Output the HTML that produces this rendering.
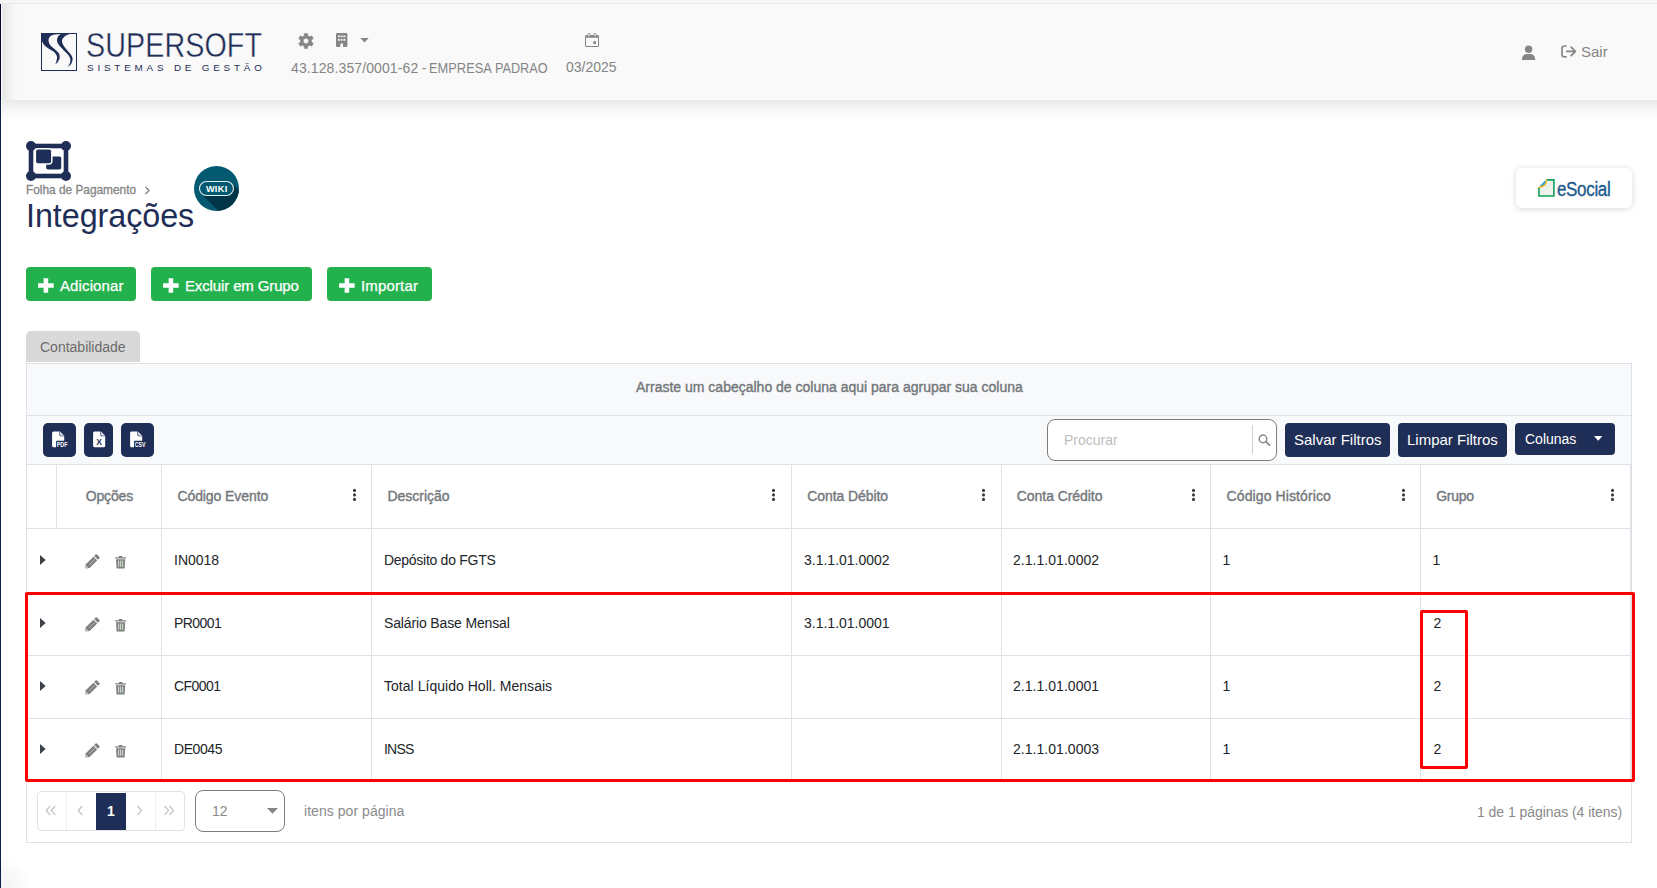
<!DOCTYPE html>
<html lang="pt-br">
<head>
<meta charset="utf-8">
<title>Integrações</title>
<style>
*{box-sizing:border-box;margin:0;padding:0}
html,body{width:1657px;height:888px;overflow:hidden;background:#fff}
body{font-family:"Liberation Sans",sans-serif;position:relative;color:#212529}
.abs{position:absolute}
.t{position:absolute;white-space:nowrap;line-height:1}
#strip{left:0;top:0;width:1657px;height:4px;background:#f5f5f5;border-bottom:1px solid #e9e9e9}
#hdr{left:2px;top:4px;width:1655px;height:96px;background:#f9f9f9}
#hdrsb{left:2px;top:100px;width:1655px;height:24px;background:linear-gradient(180deg,rgba(0,0,0,.085) 0,rgba(0,0,0,.05) 25%,rgba(0,0,0,.022) 55%,rgba(0,0,0,.006) 80%,rgba(0,0,0,0) 100%)}
#hdrsh{left:2px;top:4px;width:16px;height:96px;background:linear-gradient(90deg,rgba(0,0,0,.075),rgba(0,0,0,.03) 45%,rgba(0,0,0,0))}
#side1{left:0;top:4px;width:1px;height:96px;background:#02062b}
#side2{left:0;top:100px;width:1px;height:788px;background:#0d1f4a}
.gray{color:#858585}
.navy{color:#1f2e56}
.gbtn{position:absolute;top:267px;height:34px;background:#23b14d;border-radius:4px}
.nbtn{position:absolute;background:#1f2e56;border-radius:4px}
#grid{left:26px;top:363px;width:1606px;height:480px;border:1px solid #dee2e6;background:#fff}
.hl{position:absolute;height:1px;background:#dee2e6}
.vl{position:absolute;width:1px;background:#dee2e6}
.th{color:#73777b;font-size:14px;-webkit-text-stroke:0.38px #73777b}
.td{color:#212529;font-size:14px}
.bw{color:#fff;font-size:15px;-webkit-text-stroke:0.25px #fff}
.pg{color:#8a8a8a;font-size:14px}
</style>
</head>
<body>
<div class="abs" id="strip"></div>
<div class="abs" id="hdr"></div>
<div class="abs" id="hdrsh"></div>
<div class="abs" id="hdrsb"></div>
<div class="abs" id="side1"></div>
<div class="abs" id="side2"></div>
<div class="abs" style="left:1px;top:858px;width:30px;height:30px;background:radial-gradient(circle at 0 100%,rgba(0,0,0,.05),rgba(0,0,0,.02) 50%,rgba(0,0,0,0) 72%)"></div>

<!-- LOGO -->
<svg class="abs" id="i_logo" style="left:41px;top:33px" width="36" height="38" viewBox="0 0 36 38">
<rect x="0.5" y="0.5" width="35" height="37" fill="none" stroke="#1f2e56" stroke-width="1"/>
<path fill="#1f2e56" d="M0.90,8.30 C1.32,8.97 2.25,11.06 3.40,12.30 C4.55,13.54 6.15,14.60 7.80,15.75 C9.45,16.90 11.93,17.88 13.30,19.20 C14.67,20.52 15.67,22.13 16.00,23.70 C16.33,25.27 15.58,27.32 15.30,28.60 C15.02,29.88 14.47,30.93 14.30,31.40 C14.70,31.02 15.97,30.22 16.70,29.10 C17.43,27.98 18.53,26.18 18.70,24.70 C18.87,23.22 18.52,21.62 17.70,20.20 C16.88,18.78 15.20,17.52 13.80,16.20 C12.40,14.88 10.33,13.62 9.30,12.30 C8.27,10.98 7.77,9.62 7.60,8.30 C7.43,6.98 7.60,5.47 8.30,4.40 C9.00,3.33 9.90,2.48 11.80,1.90 C13.70,1.32 18.38,1.07 19.70,0.90 L0.9,0.9 Z"/>
<path fill="#1f2e56" d="M19.70,0.90 C19.20,1.40 17.32,2.75 16.70,3.90 C16.08,5.05 15.83,6.48 16.00,7.80 C16.17,9.12 16.75,10.40 17.70,11.80 C18.65,13.20 20.22,14.63 21.70,16.20 C23.18,17.77 25.37,19.70 26.60,21.20 C27.83,22.70 28.68,23.80 29.10,25.20 C29.52,26.60 29.47,28.12 29.10,29.60 C28.73,31.08 27.27,33.35 26.90,34.10 C27.43,33.60 29.32,32.35 30.10,31.10 C30.88,29.85 31.52,28.00 31.60,26.60 C31.68,25.20 31.43,24.18 30.60,22.70 C29.77,21.22 27.92,19.35 26.60,17.70 C25.28,16.05 23.63,14.37 22.70,12.80 C21.77,11.23 21.08,9.62 21.00,8.30 C20.92,6.98 21.33,5.97 22.20,4.90 C23.07,3.83 24.47,2.62 26.20,1.90 C27.93,1.18 31.53,0.82 32.60,0.60 Z"/>
</svg>
<div class="t navy" id="t_super" style="left:85.500px;top:28px;font-size:35.5px;letter-spacing:0.1px;transform-origin:0 0;transform:scaleX(0.808);-webkit-text-stroke:0.4px #f9f9f9">SUPERSOFT</div>
<div class="t navy" id="t_sist" style="left:87px;top:62.500px;font-size:9.9px;letter-spacing:3.8px">SISTEMAS DE GESTÃO</div>

<svg class="abs" id="i_gear" style="left:298px;top:33px" width="16" height="16" viewBox="0 0 16 16"><path fill="#858585" fill-rule="evenodd" stroke="#858585" stroke-width="0.5" stroke-linejoin="round" d="M6.21 2.80L6.36 0.58A7.60 7.60 0 0 1 9.64 0.58L9.79 2.80A5.50 5.50 0 0 1 11.61 3.85L13.60 2.87A7.60 7.60 0 0 1 15.25 5.71L13.40 6.95A5.50 5.50 0 0 1 13.40 9.05L15.25 10.29A7.60 7.60 0 0 1 13.60 13.13L11.61 12.15A5.50 5.50 0 0 1 9.79 13.20L9.64 15.42A7.60 7.60 0 0 1 6.36 15.42L6.21 13.20A5.50 5.50 0 0 1 4.39 12.15L2.40 13.13A7.60 7.60 0 0 1 0.75 10.29L2.60 9.05A5.50 5.50 0 0 1 2.60 6.95L0.75 5.71A7.60 7.60 0 0 1 2.40 2.87L4.39 3.85A5.50 5.50 0 0 1 6.21 2.80ZM5.30 8.00a2.70 2.70 0 1 0 5.40 0a2.70 2.70 0 1 0 -5.40 0z"/></svg>
<svg class="abs" id="i_bld" style="left:336.300px;top:33px" width="11.400" height="14" viewBox="0 0 12 14" preserveAspectRatio="none"><path fill="#858585" fill-rule="evenodd" d="M1.300 0h9.400a1.300 1.300 0 0 1 1.300 1.300v11.400a1.300 1.300 0 0 1 -1.300 1.300h-3.200v-2.300a1.500 1.500 0 0 0 -3 0v2.300h-3.200a1.300 1.300 0 0 1 -1.300 -1.300v-11.400a1.300 1.300 0 0 1 1.300 -1.300zM2.200 2.500v1.700h1.900v-1.700zM5.050 2.500v1.700h1.900v-1.700zM7.900 2.500v1.700h1.900v-1.700zM2.200 6v1.700h1.900v-1.700zM5.050 6v1.700h1.900v-1.700zM7.900 6v1.700h1.900v-1.700z"/></svg>
<svg class="abs" id="i_caret" style="left:360px;top:38px" width="9" height="5" viewBox="0 0 9 5"><path fill="#858585" d="M0.300 0h8.400l-4.200 4.600z"/></svg>
<svg class="abs" id="i_cal" style="left:585px;top:33px" width="14" height="14" viewBox="0 0 14 14"><path fill="#858585" fill-rule="evenodd" d="M1.500 1.900h11a1.500 1.500 0 0 1 1.500 1.500v9.100a1.500 1.500 0 0 1 -1.500 1.500h-11a1.500 1.500 0 0 1 -1.500 -1.500v-9.100a1.500 1.500 0 0 1 1.500 -1.500zM1 4.700v8.300h12v-8.300zM8.300 8.300h2.700v2.700h-2.700z"/><rect x="2.900" y="0.300" width="2.100" height="3.400" rx="1" fill="#dfe6ee" stroke="#858585" stroke-width="0.700"/><rect x="9" y="0.300" width="2.100" height="3.400" rx="1" fill="#dfe6ee" stroke="#858585" stroke-width="0.700"/></svg>
<svg class="abs" id="i_user" style="left:1522px;top:45px" width="14" height="15" viewBox="0 0 14 15"><g fill="#858585"><circle cx="6.600" cy="4.200" r="3.700"/><path d="M0 15v-1.200a4.800 4.800 0 0 1 4.800 -4.800h3.600a4.800 4.800 0 0 1 4.800 4.800v1.200z"/></g></svg>
<svg class="abs" id="i_out" style="left:1561px;top:45px" width="16" height="14" viewBox="0 0 16 14"><g fill="none" stroke="#858585" stroke-width="1.700" stroke-linecap="round" stroke-linejoin="round"><path d="M5 1H3.200A2.200 2.200 0 0 0 1 3.200v6.400A2.200 2.200 0 0 0 3.200 11.800h1.800"/><path d="M5.800 6.400h8.500M10.200 2.200l4.200 4.200l-4.200 4.200"/></g></svg>

<div class="t gray" id="t_cnpj" style="left:291px;top:61px;font-size:14px;letter-spacing:0.11px">43.128.357/0001-62<span style="letter-spacing:-0.5px"> -</span></div>
<div class="t gray" id="t_emp" style="left:429px;top:61px;font-size:14px;transform-origin:0 0;transform:scaleX(0.918)">EMPRESA</div>
<div class="t gray" id="t_pad" style="left:495.200px;top:61px;font-size:14px;transform-origin:0 0;transform:scaleX(0.905)">PADRAO</div>
<div class="t gray" id="t_date" style="left:566px;top:60px;font-size:14px">03/2025</div>
<div class="t gray" id="t_sair" style="left:1581px;top:44px;font-size:15px">Sair</div>

<!-- page icon -->
<svg class="abs" id="i_page" style="left:26px;top:141px" width="45" height="40" viewBox="0 0 45 40"><g fill="#1f2e56"><rect x="5" y="5" width="35" height="30" fill="none" stroke="#1f2e56" stroke-width="4.600"/><circle cx="5" cy="5" r="5"/><circle cx="40" cy="5" r="5"/><circle cx="5" cy="35" r="5"/><circle cx="40" cy="35" r="5"/><rect x="20.200" y="15.500" width="15" height="13" rx="1.800"/><rect x="8.600" y="6.900" width="18" height="16.800" rx="4" fill="#fff"/><rect x="10.100" y="8.400" width="15" height="13.800" rx="1.800"/></g></svg>
<div class="t" id="t_folha" style="left:26px;top:184.800px;font-size:11.9px;color:#868686;letter-spacing:-0.02px;-webkit-text-stroke:0.3px #868686">Folha de Pagamento</div>
<svg class="abs" id="i_gt" style="left:144px;top:186px" width="7" height="9" viewBox="0 0 7 9"><path d="M1.500 1l3.600 3.500l-3.600 3.500" fill="none" stroke="#7a7a7a" stroke-width="1.200"/></svg>
<div class="t navy" id="t_integ" style="left:26px;top:200px;font-size:32.3px;letter-spacing:-0.05px">Integrações</div>

<!-- wiki -->
<svg class="abs" id="i_wiki" style="left:194px;top:166px" width="45" height="45" viewBox="0 0 45 45"><defs><clipPath id="cw"><circle cx="22.500" cy="22.500" r="22.500"/></clipPath></defs><circle cx="22.500" cy="22.500" r="22.500" fill="#03596f"/><g clip-path="url(#cw)"><path fill="#023447" d="M7.200 27.800L37.800 17.200L77.800 57.200L47.200 67.800z"/></g><rect x="5.500" y="15.500" width="34" height="14" rx="7" fill="#03596f" stroke="#e4eef1" stroke-width="1.100"/><text x="22.700" y="25.700" text-anchor="middle" font-family="Liberation Sans, sans-serif" font-weight="bold" font-size="9.200" fill="#fff" letter-spacing="0.300">WIKI</text></svg>

<!-- eSocial -->
<div class="abs" style="left:1516px;top:168px;width:116px;height:40px;background:#fff;border-radius:6px;box-shadow:0 1px 6px rgba(0,0,0,.16)"></div>
<svg class="abs" id="i_esoc" style="left:1538px;top:179px" width="17" height="18" viewBox="0 0 17 18"><path d="M8.300 0.900H15.900V17H0.900V8.300" fill="#edf2ec" stroke="#12a159" stroke-width="1.600" stroke-linejoin="miter"/><path d="M0.100 9.100L9.100 0.100C9.600 5.600 6 9.300 0.100 9.100z" fill="#f9b115"/><path d="M1.600 7.100L7.800 0.900C8 4.300 5.500 7 1.600 7.100z" fill="#2aa9e0"/></svg>
<div class="t" id="t_esoc" style="left:1557px;top:179px;font-size:20px;color:#1d5a8c;letter-spacing:-0.4px;transform-origin:0 0;transform:scaleX(.85);-webkit-text-stroke:0.35px #1d5a8c">eSocial</div>

<!-- green buttons -->
<div class="gbtn" style="left:26px;width:110px"></div>
<div class="gbtn" style="left:151px;width:161px"></div>
<div class="gbtn" style="left:327px;width:105px"></div>
<div class="t bw" id="t_adic" style="left:60px;top:278px;letter-spacing:0.12px">Adicionar</div>
<div class="t bw" id="t_excl" style="left:185px;top:278px;letter-spacing:-0.13px">Excluir em Grupo</div>
<div class="t bw" id="t_impo" style="left:361px;top:278px;letter-spacing:0.15px">Importar</div>
<svg class="abs" style="left:38px;top:278px" width="16" height="15" viewBox="0 0 16 15"><path fill="#fff" d="M5.600 0.200h4.600v5h5.500v4.600h-5.500v5h-4.600v-5h-5.500v-4.600h5.500z"/></svg>
<svg class="abs" style="left:163px;top:278px" width="16" height="15" viewBox="0 0 16 15"><path fill="#fff" d="M5.600 0.200h4.600v5h5.500v4.600h-5.500v5h-4.600v-5h-5.500v-4.600h5.500z"/></svg>
<svg class="abs" style="left:339px;top:278px" width="16" height="15" viewBox="0 0 16 15"><path fill="#fff" d="M5.600 0.200h4.600v5h5.500v4.600h-5.500v5h-4.600v-5h-5.500v-4.600h5.500z"/></svg>

<!-- tab -->
<div class="abs" style="left:26px;top:331px;width:114px;height:31px;background:#d9d9d9;border-radius:5px 5px 0 0;border:1px solid #d4d7db;border-bottom:0"></div>
<div class="t" id="t_tab" style="left:40px;top:340px;font-size:14px;color:#6b6b6b">Contabilidade</div>

<!-- grid -->
<div class="abs" id="grid"></div>
<div class="abs" style="left:27px;top:364px;width:1604px;height:100px;background:#f8f9fa"></div>
<div class="hl" style="left:27px;top:415px;width:1604px"></div>
<div class="hl" style="left:27px;top:464px;width:1604px"></div>
<div class="hl" style="left:27px;top:528px;width:1604px"></div>
<div class="hl" style="left:27px;top:592px;width:1604px"></div>
<div class="hl" style="left:27px;top:655px;width:1604px"></div>
<div class="hl" style="left:27px;top:718px;width:1604px"></div>
<div class="hl" style="left:27px;top:781px;width:1604px"></div>
<div class="vl" style="left:56px;top:465px;height:63px"></div>
<div class="vl" style="left:161px;top:465px;height:316px"></div>
<div class="vl" style="left:371px;top:465px;height:316px"></div>
<div class="vl" style="left:791px;top:465px;height:316px"></div>
<div class="vl" style="left:1001px;top:465px;height:316px"></div>
<div class="vl" style="left:1210px;top:465px;height:316px"></div>
<div class="vl" style="left:1420px;top:465px;height:316px"></div>
<div class="vl" style="left:1630px;top:465px;height:316px"></div>
<div class="t th" id="t_group" style="left:636px;top:380px;letter-spacing:0px">Arraste um cabeçalho de coluna aqui para agrupar sua coluna</div>

<div class="nbtn" style="left:43px;top:423px;width:33px;height:34px;border-radius:5px"></div>
<div class="nbtn" style="left:84px;top:423px;width:29px;height:34px;border-radius:5px"></div>
<div class="nbtn" style="left:121px;top:423px;width:33px;height:34px;border-radius:5px"></div>
<svg class="abs" style="left:51.6px;top:431px" width="20" height="17" viewBox="0 0 20 17"><path fill="#fff" d="M1.600 0.400h6.200l4.400 4.400v10a1.500 1.500 0 0 1 -1.500 1.500h-9.100a1.500 1.500 0 0 1 -1.500 -1.500v-12.900a1.500 1.500 0 0 1 1.500 -1.500z"/><path fill="#1f2e56" d="M7.400 0.400v3.300a1.500 1.500 0 0 0 1.500 1.500h3.300v-0.700h-3a1.100 1.100 0 0 1 -1.100 -1.100v-3z"/><path fill="#c9d0e4" d="M8.100 0.700l3.800 3.800h-2.700a1.100 1.100 0 0 1 -1.100 -1.100z"/><rect x="4.0" y="9.700" width="16" height="8" rx="1" fill="#1f2e56"/><text x="4.8" y="15.900" font-family="Liberation Sans, sans-serif" font-weight="bold" font-size="7" fill="#fff" textLength="10.600" lengthAdjust="spacingAndGlyphs">PDF</text></svg>
<svg class="abs" style="left:92.8px;top:431px" width="20" height="17" viewBox="0 0 20 17"><path fill="#fff" d="M1.600 0.400h6.200l4.400 4.400v10a1.500 1.500 0 0 1 -1.500 1.500h-9.100a1.500 1.500 0 0 1 -1.500 -1.500v-12.900a1.500 1.500 0 0 1 1.500 -1.500z"/><path fill="#1f2e56" d="M7.400 0.400v3.300a1.500 1.500 0 0 0 1.500 1.500h3.300v-0.700h-3a1.100 1.100 0 0 1 -1.100 -1.100v-3z"/><path fill="#c9d0e4" d="M8.100 0.700l3.800 3.800h-2.700a1.100 1.100 0 0 1 -1.100 -1.100z"/><text x="6.100" y="14" text-anchor="middle" font-family="Liberation Sans, sans-serif" font-weight="bold" font-size="8.500" fill="#1f2e56">X</text></svg>
<svg class="abs" style="left:130.2px;top:431px" width="20" height="17" viewBox="0 0 20 17"><path fill="#fff" d="M1.600 0.400h6.200l4.400 4.400v10a1.500 1.500 0 0 1 -1.500 1.500h-9.100a1.500 1.500 0 0 1 -1.500 -1.500v-12.900a1.500 1.500 0 0 1 1.500 -1.500z"/><path fill="#1f2e56" d="M7.400 0.400v3.300a1.500 1.500 0 0 0 1.500 1.500h3.300v-0.700h-3a1.100 1.100 0 0 1 -1.100 -1.100v-3z"/><path fill="#c9d0e4" d="M8.100 0.700l3.800 3.800h-2.700a1.100 1.100 0 0 1 -1.100 -1.100z"/><rect x="4.0" y="9.700" width="16" height="8" rx="1" fill="#1f2e56"/><text x="4.8" y="15.900" font-family="Liberation Sans, sans-serif" font-weight="bold" font-size="7" fill="#fff" textLength="10.600" lengthAdjust="spacingAndGlyphs">CSV</text></svg>

<div class="abs" style="left:1047px;top:419px;width:230px;height:42px;border:1px solid #7d7d7d;border-radius:8px;background:#fff"></div>
<div class="vl" style="left:1252px;top:425px;height:29px;background:#cfcfcf"></div>
<div class="t" id="t_proc" style="left:1064px;top:433px;font-size:14px;color:#bdbdbd">Procurar</div>
<svg class="abs" id="i_search" style="left:1258px;top:434px" width="13" height="12" viewBox="0 0 13 12"><circle cx="5" cy="4.900" r="3.800" fill="none" stroke="#8a8a8a" stroke-width="1.500"/><path d="M7.900 7.700L11.500 11.200" stroke="#8a8a8a" stroke-width="1.800" stroke-linecap="round"/></svg>
<div class="nbtn" style="left:1285px;top:423px;width:105px;height:34px"></div>
<div class="nbtn" style="left:1398px;top:423px;width:109px;height:34px"></div>
<div class="nbtn" style="left:1515px;top:423px;width:100px;height:32px"></div>
<div class="t" id="t_salvar" style="left:1294px;top:432px;font-size:15px;color:#fff">Salvar Filtros</div>
<div class="t" id="t_limpar" style="left:1407px;top:432px;font-size:15px;color:#fff">Limpar Filtros</div>
<div class="t" id="t_colunas" style="left:1525px;top:432px;font-size:14px;color:#fff">Colunas</div>
<svg class="abs" style="left:1594px;top:436px" width="9" height="5" viewBox="0 0 9 5"><path fill="#fff" d="M0 0h8.400l-4.200 4.800z"/></svg>
<div class="t th" id="h_opc" style="left:85.7px;top:489px;letter-spacing:-0.15px">Opções</div>
<div class="t th" id="h_cod" style="left:177.4px;top:489px;letter-spacing:-0.08px">Código Evento</div>
<div class="t th" id="h_desc" style="left:387.4px;top:489px;letter-spacing:0px">Descrição</div>
<div class="t th" id="h_deb" style="left:807.2px;top:489px;letter-spacing:-0.08px">Conta Débito</div>
<div class="t th" id="h_cred" style="left:1016.8px;top:489px;letter-spacing:-0.06px">Conta Crédito</div>
<div class="t th" id="h_hist" style="left:1226.6px;top:489px;letter-spacing:0.1px">Código Histórico</div>
<div class="t th" id="h_grp" style="left:1436.2px;top:489px;letter-spacing:-0.25px">Grupo</div>
<svg class="abs" style="left:351.9px;top:488px" width="5" height="14" viewBox="0 0 5 14"><g fill="#3a3a3a"><circle cx="2.500" cy="2.400" r="1.550"/><circle cx="2.500" cy="6.900" r="1.550"/><circle cx="2.500" cy="11.400" r="1.550"/></g></svg>
<svg class="abs" style="left:770.9px;top:488px" width="5" height="14" viewBox="0 0 5 14"><g fill="#3a3a3a"><circle cx="2.500" cy="2.400" r="1.550"/><circle cx="2.500" cy="6.900" r="1.550"/><circle cx="2.500" cy="11.400" r="1.550"/></g></svg>
<svg class="abs" style="left:980.9px;top:488px" width="5" height="14" viewBox="0 0 5 14"><g fill="#3a3a3a"><circle cx="2.500" cy="2.400" r="1.550"/><circle cx="2.500" cy="6.900" r="1.550"/><circle cx="2.500" cy="11.400" r="1.550"/></g></svg>
<svg class="abs" style="left:1190.9px;top:488px" width="5" height="14" viewBox="0 0 5 14"><g fill="#3a3a3a"><circle cx="2.500" cy="2.400" r="1.550"/><circle cx="2.500" cy="6.900" r="1.550"/><circle cx="2.500" cy="11.400" r="1.550"/></g></svg>
<svg class="abs" style="left:1400.7px;top:488px" width="5" height="14" viewBox="0 0 5 14"><g fill="#3a3a3a"><circle cx="2.500" cy="2.400" r="1.550"/><circle cx="2.500" cy="6.900" r="1.550"/><circle cx="2.500" cy="11.400" r="1.550"/></g></svg>
<svg class="abs" style="left:1610.4px;top:488px" width="5" height="14" viewBox="0 0 5 14"><g fill="#3a3a3a"><circle cx="2.500" cy="2.400" r="1.550"/><circle cx="2.500" cy="6.900" r="1.550"/><circle cx="2.500" cy="11.400" r="1.550"/></g></svg>
<svg class="abs" style="left:40px;top:555px" width="6" height="10" viewBox="0 0 6 10"><path fill="#3d4249" d="M0 0l5.600 5l-5.600 5z"/></svg>
<svg class="abs" style="left:85px;top:554.3px" width="15" height="15" viewBox="0 0 15 15"><g fill="#808080"><path d="M10.600 0.500a1 1 0 0 1 1.400 0l2.400 2.400a1 1 0 0 1 0 1.400l-1.500 1.500l-3.800 -3.800z"/><path d="M8.400 2.700l3.800 3.800l-7.600 7.600l-4.300 0.500l0.500 -4.300z"/></g><path d="M1.500 12l1.500 1.500l-1.800 0.300z" fill="#fff"/><path d="M4 11l5.600 -5.600" stroke="#d8d8d8" stroke-width="0.600"/></svg>
<svg class="abs" style="left:115px;top:555.8px" width="12" height="13" viewBox="0 0 12 13"><g fill="#808080"><path d="M3.900 0h3.400v1.200h3.700v1.400h-10.800v-1.400h3.700z"/><path d="M1 3.200h9.200l-0.500 8.500a0.900 0.900 0 0 1 -0.900 0.900h-6.400a0.900 0.900 0 0 1 -0.900 -0.900z"/></g><g fill="#cfe0cf"><rect x="3.100" y="4.600" width="1.050" height="6.200"/><rect x="5.100" y="4.600" width="1.050" height="6.200"/><rect x="7.100" y="4.600" width="1.050" height="6.200"/></g></svg>
<div class="t td" id="r0c0" style="left:174px;top:553px;letter-spacing:0px">IN0018</div>
<div class="t td" id="r0c1" style="left:384px;top:553px;letter-spacing:-0.28px">Depósito do FGTS</div>
<div class="t td" id="r0c2" style="left:804px;top:553px;letter-spacing:0px">3.1.1.01.0002</div>
<div class="t td" id="r0c3" style="left:1013px;top:553px;letter-spacing:0.04px">2.1.1.01.0002</div>
<div class="t td" id="r0c4" style="left:1222.5px;top:553px;letter-spacing:0px">1</div>
<div class="t td" id="r0c5" style="left:1432.5px;top:553px;letter-spacing:0px">1</div>
<svg class="abs" style="left:40px;top:618px" width="6" height="10" viewBox="0 0 6 10"><path fill="#3d4249" d="M0 0l5.600 5l-5.600 5z"/></svg>
<svg class="abs" style="left:85px;top:617.3px" width="15" height="15" viewBox="0 0 15 15"><g fill="#808080"><path d="M10.600 0.500a1 1 0 0 1 1.400 0l2.400 2.400a1 1 0 0 1 0 1.400l-1.500 1.500l-3.800 -3.800z"/><path d="M8.400 2.700l3.800 3.800l-7.600 7.600l-4.300 0.500l0.500 -4.300z"/></g><path d="M1.500 12l1.500 1.500l-1.800 0.300z" fill="#fff"/><path d="M4 11l5.600 -5.600" stroke="#d8d8d8" stroke-width="0.600"/></svg>
<svg class="abs" style="left:115px;top:618.8px" width="12" height="13" viewBox="0 0 12 13"><g fill="#808080"><path d="M3.900 0h3.400v1.200h3.700v1.400h-10.800v-1.400h3.700z"/><path d="M1 3.200h9.200l-0.500 8.500a0.900 0.900 0 0 1 -0.900 0.900h-6.400a0.900 0.900 0 0 1 -0.900 -0.900z"/></g><g fill="#cfe0cf"><rect x="3.100" y="4.600" width="1.050" height="6.200"/><rect x="5.100" y="4.600" width="1.050" height="6.200"/><rect x="7.100" y="4.600" width="1.050" height="6.200"/></g></svg>
<div class="t td" id="r1c0" style="left:174px;top:616px;letter-spacing:-0.55px">PR0001</div>
<div class="t td" id="r1c1" style="left:384px;top:616px;letter-spacing:-0.14px">Salário Base Mensal</div>
<div class="t td" id="r1c2" style="left:804px;top:616px;letter-spacing:0px">3.1.1.01.0001</div>
<div class="t td" id="r1c5" style="left:1433.6px;top:616px;letter-spacing:0px">2</div>
<svg class="abs" style="left:40px;top:681px" width="6" height="10" viewBox="0 0 6 10"><path fill="#3d4249" d="M0 0l5.600 5l-5.600 5z"/></svg>
<svg class="abs" style="left:85px;top:680.3px" width="15" height="15" viewBox="0 0 15 15"><g fill="#808080"><path d="M10.600 0.500a1 1 0 0 1 1.400 0l2.400 2.400a1 1 0 0 1 0 1.400l-1.500 1.500l-3.800 -3.800z"/><path d="M8.400 2.700l3.800 3.800l-7.600 7.600l-4.300 0.500l0.500 -4.300z"/></g><path d="M1.500 12l1.500 1.500l-1.800 0.300z" fill="#fff"/><path d="M4 11l5.600 -5.600" stroke="#d8d8d8" stroke-width="0.600"/></svg>
<svg class="abs" style="left:115px;top:681.8px" width="12" height="13" viewBox="0 0 12 13"><g fill="#808080"><path d="M3.900 0h3.400v1.200h3.700v1.400h-10.800v-1.400h3.700z"/><path d="M1 3.200h9.200l-0.500 8.500a0.900 0.900 0 0 1 -0.900 0.900h-6.400a0.900 0.900 0 0 1 -0.900 -0.900z"/></g><g fill="#cfe0cf"><rect x="3.100" y="4.600" width="1.050" height="6.200"/><rect x="5.100" y="4.600" width="1.050" height="6.200"/><rect x="7.100" y="4.600" width="1.050" height="6.200"/></g></svg>
<div class="t td" id="r2c0" style="left:174px;top:679px;letter-spacing:-0.55px">CF0001</div>
<div class="t td" id="r2c1" style="left:384px;top:679px;letter-spacing:0.03px">Total Líquido Holl. Mensais</div>
<div class="t td" id="r2c3" style="left:1013px;top:679px;letter-spacing:0.04px">2.1.1.01.0001</div>
<div class="t td" id="r2c4" style="left:1222.5px;top:679px;letter-spacing:0px">1</div>
<div class="t td" id="r2c5" style="left:1433.6px;top:679px;letter-spacing:0px">2</div>
<svg class="abs" style="left:40px;top:744px" width="6" height="10" viewBox="0 0 6 10"><path fill="#3d4249" d="M0 0l5.600 5l-5.600 5z"/></svg>
<svg class="abs" style="left:85px;top:743.3px" width="15" height="15" viewBox="0 0 15 15"><g fill="#808080"><path d="M10.600 0.500a1 1 0 0 1 1.400 0l2.400 2.400a1 1 0 0 1 0 1.400l-1.500 1.500l-3.800 -3.800z"/><path d="M8.400 2.700l3.800 3.800l-7.600 7.600l-4.300 0.500l0.500 -4.300z"/></g><path d="M1.500 12l1.500 1.500l-1.800 0.300z" fill="#fff"/><path d="M4 11l5.600 -5.600" stroke="#d8d8d8" stroke-width="0.600"/></svg>
<svg class="abs" style="left:115px;top:744.8px" width="12" height="13" viewBox="0 0 12 13"><g fill="#808080"><path d="M3.900 0h3.400v1.200h3.700v1.400h-10.800v-1.400h3.700z"/><path d="M1 3.200h9.200l-0.500 8.500a0.900 0.900 0 0 1 -0.900 0.900h-6.400a0.900 0.900 0 0 1 -0.900 -0.900z"/></g><g fill="#cfe0cf"><rect x="3.100" y="4.600" width="1.050" height="6.200"/><rect x="5.100" y="4.600" width="1.050" height="6.200"/><rect x="7.100" y="4.600" width="1.050" height="6.200"/></g></svg>
<div class="t td" id="r3c0" style="left:174px;top:742px;letter-spacing:-0.42px">DE0045</div>
<div class="t td" id="r3c1" style="left:384px;top:742px;letter-spacing:-0.8px">INSS</div>
<div class="t td" id="r3c3" style="left:1013px;top:742px;letter-spacing:0.04px">2.1.1.01.0003</div>
<div class="t td" id="r3c4" style="left:1222.5px;top:742px;letter-spacing:0px">1</div>
<div class="t td" id="r3c5" style="left:1433.6px;top:742px;letter-spacing:0px">2</div>

<!-- pager -->
<div class="abs" style="left:37px;top:791px;width:148px;height:40px;border:1px solid #e2e2e2;border-radius:4px;background:#fff"></div>
<div class="vl" style="left:66px;top:792px;height:38px;background:#efefef"></div>
<div class="vl" style="left:155px;top:792px;height:38px;background:#efefef"></div>
<div class="abs" style="left:96px;top:793px;width:30px;height:37px;background:#1f2e56"></div>
<div class="t" id="p_1" style="left:107px;top:804px;font-size:14px;font-weight:bold;color:#fff">1</div>
<svg class="abs" style="left:45px;top:805px" width="12" height="11" viewBox="0 0 12 11"><path d="M5.200 1L1.200 5.500l4 4.500M10.200 1L6.200 5.500l4 4.500" fill="none" stroke="#c4c4c4" stroke-width="1.200"/></svg>
<svg class="abs" style="left:77px;top:805px" width="7" height="11" viewBox="0 0 7 11"><path d="M5.200 1L1.200 5.500l4 4.500" fill="none" stroke="#c4c4c4" stroke-width="1.200"/></svg>
<svg class="abs" style="left:136px;top:805px" width="7" height="11" viewBox="0 0 7 11"><path d="M1.500 1l4 4.500l-4 4.500" fill="none" stroke="#c4c4c4" stroke-width="1.200"/></svg>
<svg class="abs" style="left:163px;top:805px" width="12" height="11" viewBox="0 0 12 11"><path d="M1.500 1l4 4.500l-4 4.500M6.500 1l4 4.500l-4 4.500" fill="none" stroke="#c4c4c4" stroke-width="1.200"/></svg>
<div class="abs" style="left:195px;top:790px;width:90px;height:42px;border:1px solid #7d7d7d;border-radius:8px;background:#fff"></div>
<div class="t pg" id="p_12" style="left:212px;top:804px">12</div>
<svg class="abs" style="left:267px;top:808px" width="11" height="6" viewBox="0 0 11 6"><path fill="#858585" d="M0 0h11l-5.500 5.800z"/></svg>
<div class="t pg" id="p_itens" style="left:304px;top:803.600px;letter-spacing:0.05px">itens por página</div>
<div class="t pg" id="p_info" style="left:1477px;top:804.500px;letter-spacing:-0.05px">1 de 1 páginas (4 itens)</div>

<!-- red annotation boxes -->
<div class="abs" style="left:25px;top:592px;width:1610px;height:190px;border:3px solid #fe0000;border-radius:2px"></div>
<div class="abs" style="left:1420px;top:610px;width:48px;height:159px;border:3px solid #fe0000;border-radius:2px"></div>
</body>
</html>
